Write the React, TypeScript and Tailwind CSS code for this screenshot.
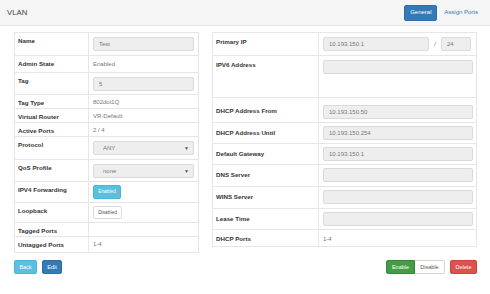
const font = { fontFamily: '"Liberation Sans", Arial, sans-serif' };

function Field({ value = '', w = 'w-full' }: { value?: string; w?: string }) {
  return (
    <div className={`${w} h-[14px] bg-[#eeeeee] border border-[#dadada] rounded-[2px] flex items-center px-[5px] text-[6px] text-[#777]`}>
      {value}
    </div>
  );
}

function Select({ value }: { value: string }) {
  return (
    <div className="w-full h-[14px] bg-[#eeeeee] border border-[#dadada] rounded-[2px] flex items-center justify-between pl-[9px] pr-[4px] text-[6px] text-[#777]">
      <span>{value}</span>
      <span className="text-[5px] text-[#555]">▼</span>
    </div>
  );
}

function Row({ label, h, children, first }: { label: string; h: string; children?: React.ReactNode; first?: boolean }) {
  return (
    <div className={`flex ${h} ${first ? '' : 'border-t border-[#e6e6e6]'}`}>
      <div className="w-[74px] shrink-0 border-r border-[#e6e6e6] pl-[3px] pt-[4px] text-[6.2px] font-bold text-[#333] leading-[8px]">{label}</div>
      <div className="flex-1 px-[4px] pt-[3px] text-[6px] text-[#777] leading-[8px]">{children}</div>
    </div>
  );
}

function RRow({ label, h, children, first, lp = 'pt-[5px]' }: { label: string; h: string; children?: React.ReactNode; first?: boolean; lp?: string }) {
  return (
    <div className={`flex ${h} ${first ? '' : 'border-t border-[#e6e6e6]'}`}>
      <div className={`w-[106px] shrink-0 border-r border-[#e6e6e6] pl-[3px] ${lp} text-[6.2px] font-bold text-[#333] leading-[8px]`}>{label}</div>
      <div className="flex-1 pl-[4px] pr-[3px] pt-[3px] text-[6px] text-[#777] leading-[8px]">{children}</div>
    </div>
  );
}

export default function App() {
  return (
    <div className="w-[490px] h-[294px] bg-white overflow-hidden" style={font}>
      <div className="h-[26px] bg-[#f5f5f5] border-b border-[#e6e6e6] flex items-center pl-[7px] pr-[12px]">
        <div className="text-[7.8px] text-[#444]">VLAN</div>
        <div className="ml-auto flex items-center gap-[7px]">
          <div className="h-[16px] w-[33px] bg-[#337ab7] border border-[#2e6da4] rounded-[2px] text-white text-[6px] flex items-center justify-center">General</div>
          <div className="text-[6px] text-[#337ab7]">Assign Ports</div>
        </div>
      </div>

      <div className="pl-[14px] pt-[6px] pr-[13px]">
        <div className="flex items-start gap-[13px]">
          <div className="w-[185px] border border-[#e6e6e6]">
            <Row first label="Name" h="h-[22px]"><div className="pt-[1px]"><Field value="Test" /></div></Row>
            <Row label="Admin State" h="h-[17px]"><div className="pt-[1px]">Enabled</div></Row>
            <Row label="Tag" h="h-[22px]"><div className="pt-[1px]"><Field value="5" /></div></Row>
            <Row label="Tag Type" h="h-[14px]">802dot1Q</Row>
            <Row label="Virtual Router" h="h-[14px]">VR-Default</Row>
            <Row label="Active Ports" h="h-[14px]">2 / 4</Row>
            <Row label="Protocol" h="h-[23px]"><div className="pt-[1px]"><Select value="ANY" /></div></Row>
            <Row label="QoS Profile" h="h-[22px]"><div className="pt-[1px]"><Select value="none" /></div></Row>
            <Row label="IPV4 Forwarding" h="h-[21px]">
              <div className="w-[28px] h-[14px] bg-[#5bc0de] border border-[#46b8da] rounded-[2px] text-white text-[4.8px] flex items-center justify-center">Enabled</div>
            </Row>
            <Row label="Loopback" h="h-[20px]">
              <div className="w-[29px] h-[13px] bg-white border border-[#dcdcdc] rounded-[2px] text-[#555] text-[4.8px] flex items-center justify-center">Disabled</div>
            </Row>
            <Row label="Tagged Ports" h="h-[14px]" />
            <Row label="Untagged Ports" h="h-[16px]">1-4</Row>
          </div>

          <div className="w-[265px] border border-[#e6e6e6]">
            <RRow first label="Primary IP" h="h-[22px]">
              <div className="flex items-center pt-[1px]">
                <Field value="10.193.150.1" w="w-[106px]" />
                <span className="w-[12px] text-center text-[#777]">/</span>
                <Field value="24" w="w-[30px]" />
              </div>
            </RRow>
            <RRow label="IPV6 Address" h="h-[42px]"><div className="pt-[1px]"><Field /></div></RRow>
            <RRow label="DHCP Address From" h="h-[25px]" lp="pt-[9px]"><div className="pt-[4px]"><Field value="10.193.150.50" /></div></RRow>
            <RRow label="DHCP Address Until" h="h-[21px]" lp="pt-[6px]"><Field value="10.193.150.254" /></RRow>
            <RRow label="Default Gateway" h="h-[21px]" lp="pt-[6px]"><Field value="10.193.150.1" /></RRow>
            <RRow label="DNS Server" h="h-[22px]" lp="pt-[6px]"><Field /></RRow>
            <RRow label="WINS Server" h="h-[22px]" lp="pt-[6px]"><Field /></RRow>
            <RRow label="Lease Time" h="h-[21px]" lp="pt-[6px]"><Field /></RRow>
            <RRow label="DHCP Ports" h="h-[17px]"><div className="pt-[2px]">1-4</div></RRow>
          </div>
        </div>

        <div className="flex items-center mt-[7px]">
          <div className="flex gap-[5px]">
            <div className="w-[23px] h-[14px] bg-[#5bc0de] border border-[#46b8da] rounded-[2px] text-white text-[5.5px] flex items-center justify-center">Back</div>
            <div className="w-[20px] h-[14px] bg-[#337ab7] border border-[#2e6da4] rounded-[2px] text-white text-[5.5px] flex items-center justify-center">Edit</div>
          </div>
          <div className="ml-auto flex items-center gap-[5px]">
            <div className="flex">
              <div className="w-[29px] h-[14px] bg-[#449d44] border border-[#398439] rounded-l-[2px] text-white text-[5.5px] flex items-center justify-center">Enable</div>
              <div className="w-[30px] h-[14px] bg-white border border-l-0 border-[#d5d5d5] rounded-r-[2px] text-[#555] text-[5.5px] flex items-center justify-center">Disable</div>
            </div>
            <div className="w-[27px] h-[14px] bg-[#d9534f] border border-[#d43f3a] rounded-[2px] text-white text-[5.5px] flex items-center justify-center">Delete</div>
          </div>
        </div>
      </div>
    </div>
  );
}
